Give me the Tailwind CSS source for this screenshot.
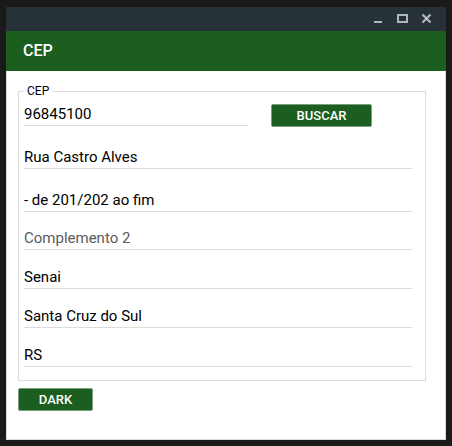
<!DOCTYPE html>
<html lang="pt-BR">
<head>
<meta charset="utf-8">
<meta name="viewport" content="width=device-width, initial-scale=1">
<title>CEP</title>
<script src="https://cdn.jsdelivr.net/npm/@tailwindcss/browser@4"></script>
</head>
<body class="flex min-h-screen flex-col bg-[#1a1a1a] px-1.5 pt-[7px] pb-1.5 font-[Roboto,sans-serif] text-[15px] text-black">
  <div class="flex grow flex-col">
    <div class="flex h-6 items-center justify-end gap-3 bg-[#263238] pr-3.5 text-[#b0b6b9]">
      <button type="button" aria-label="Minimizar" class="block"><svg class="block" width="12" height="12" viewBox="0 0 12 12" shape-rendering="crispEdges"><path d="M2 8h8v2H2z" fill="currentColor"/></svg></button>
      <button type="button" aria-label="Maximizar" class="block"><svg class="block" width="12" height="12" viewBox="0 0 12 12" shape-rendering="crispEdges"><path fill-rule="evenodd" d="M1 1h11v9H1zM3 3v5h7V3z" fill="currentColor"/></svg></button>
      <button type="button" aria-label="Fechar" class="block"><svg class="block" width="12" height="12" viewBox="0 0 12 12"><path d="M2.500 1.500l8 8M10.500 1.500l-8 8" stroke="currentColor" stroke-width="2.200"/><path d="M5.500 5.500l1-1 1 1-1 1z" fill="#e3e5e6"/></svg></button>
    </div>
    <header class="flex h-10 items-center bg-[#1b5e20] px-[17px]">
      <h1 class="text-base font-medium text-white">CEP</h1>
    </header>
    <main class="grow border border-t-0 border-[#dcdcdc] bg-white pt-[13px] pr-[19px] pb-7 pl-[11px]">
      <form>
        <fieldset class="border border-[#dcdcdc] px-[5px] pt-[5px] pb-[13px]">
          <legend class="px-[3px] text-xs leading-[15px]">CEP</legend>
          <div class="flex flex-col gap-[21px] pr-2">
            <div class="flex h-[22px] items-start gap-[23px]">
              <input aria-label="CEP" value="96845100" class="h-[22px] w-56 border-b border-[#dcdcdc] outline-none">
              <button type="button" class="h-[23px] w-[101px] rounded-xs border border-[#76a079] bg-[#1b5e20] text-[13px] leading-5 font-medium text-white">BUSCAR</button>
            </div>
            <input aria-label="Rua" value="Rua Castro Alves" class="h-[22px] w-full border-b border-[#dcdcdc] outline-none">
            <input aria-label="Complemento" value="- de 201/202 ao fim" class="h-[22px] w-full border-b border-[#dcdcdc] outline-none">
          </div>
          <div class="mt-4 flex flex-col gap-[17px] pr-2">
            <input aria-label="Complemento 2" placeholder="Complemento 2" class="h-[22px] w-full border-b border-[#dcdcdc] outline-none placeholder:text-[#5c5c5c]">
            <input aria-label="Bairro" value="Senai" class="h-[22px] w-full border-b border-[#dcdcdc] outline-none">
            <input aria-label="Cidade" value="Santa Cruz do Sul" class="h-[22px] w-full border-b border-[#dcdcdc] outline-none">
            <input aria-label="Estado" value="RS" class="h-[22px] w-full border-b border-[#dcdcdc] outline-none">
          </div>
        </fieldset>
        <button type="button" class="mt-[7px] block h-[23px] w-[75px] rounded-xs border border-[#76a079] bg-[#1b5e20] text-[13px] leading-5 font-medium text-white">DARK</button>
      </form>
    </main>
  </div>
</body>
</html>
